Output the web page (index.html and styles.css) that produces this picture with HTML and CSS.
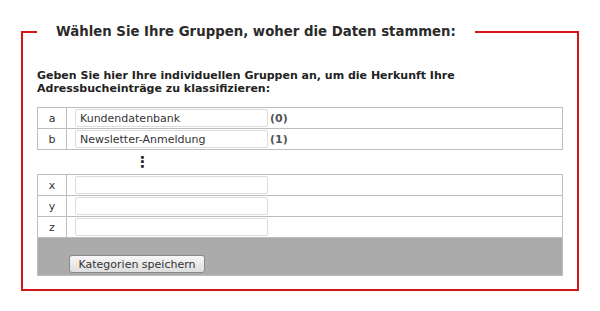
FILE: index.html
```html
<html>
<head>
<title>Gruppen</title>
<link rel="stylesheet" href="styles.css">
</head>
<body>

<fieldset class="groups">
	<legend>Wählen Sie Ihre Gruppen, woher die Daten stammen:</legend>

	<p class="intro">Geben Sie hier Ihre individuellen Gruppen an, um die Herkunft Ihre Adressbucheinträge zu klassifizieren:</p>

	<table class="group-table">
		<tr>
			<td class="letter">a</td>
			<td class="field"><input type="text" value="Kundendatenbank"><span class="count">(0)</span></td>
		</tr>
		<tr>
			<td class="letter">b</td>
			<td class="field"><input type="text" value="Newsletter-Anmeldung"><span class="count">(1)</span></td>
		</tr>
	</table>

	<div class="more">&#8942;</div>

	<table class="group-table">
		<tr>
			<td class="letter">x</td>
			<td class="field"><input type="text" value=""></td>
		</tr>
		<tr>
			<td class="letter">y</td>
			<td class="field"><input type="text" value=""></td>
		</tr>
		<tr>
			<td class="letter">z</td>
			<td class="field"><input type="text" value=""></td>
		</tr>
		<tr>
			<td class="actions" colspan="2"><button>Kategorien speichern</button></td>
		</tr>
	</table>
</fieldset>

</body>
</html>
```

FILE: styles.css
```css
html, body {
	margin: 0;
	padding: 0;
}

body {
	background-color: white;
	font-family: "DejaVu Sans", Verdana, sans-serif;
	color: #333;
}

fieldset.groups {
	margin: 23px 21px 0 21px;
	padding: 0 14px 13px 14px;
	border: 2px solid #d41616;
}

fieldset.groups legend {
	margin-left: 0;
	padding: 0 19px;
	font-size: 13.3px;
	font-weight: bold;
	line-height: 17px;
	color: #2b2b2b;
}

p.intro {
	margin: 29px 0 12px 0;
	font-size: 11px;
	font-weight: bold;
	line-height: 13px;
	color: #222;
	width: 440px;
}

table.group-table {
	width: 100%;
	border-collapse: collapse;
	border: 1px solid #bdbdbd;
}

table.group-table td {
	border: 1px solid #bdbdbd;
	padding: 0;
	height: 20px;
	font-size: 11px;
}

td.letter {
	width: 28px;
	text-align: center;
	color: #333;
}

td.field {
	padding-left: 8px !important;
}

td.field input {
	box-sizing: border-box;
	width: 193px;
	height: 18px;
	margin: 1px 0 1px 0;
	padding: 0 4px;
	border: 1px solid #dcdcdc;
	border-radius: 2px;
	font-family: "DejaVu Sans", Verdana, sans-serif;
	font-size: 11px;
	color: #333;
	vertical-align: middle;
}

span.count {
	margin-left: 2px;
	font-size: 11px;
	font-weight: bold;
	color: #555;
	vertical-align: middle;
}

div.more {
	height: 24px;
	line-height: 24px;
	padding-left: 98px;
	font-size: 15px;
	font-weight: bold;
	color: #222;
}

td.actions {
	background-color: #ababab;
	height: 38px !important;
	padding: 17px 0 2px 31px !important;
	box-sizing: border-box;
}

td.actions button {
	width: 136px;
	height: 18px;
	padding: 0;
	border: 1px solid #8a8a8a;
	border-radius: 3px;
	background: linear-gradient(#f7f7f7, #dedede);
	font-family: "DejaVu Sans", Verdana, sans-serif;
	font-size: 11px;
	color: #333;
}
```
